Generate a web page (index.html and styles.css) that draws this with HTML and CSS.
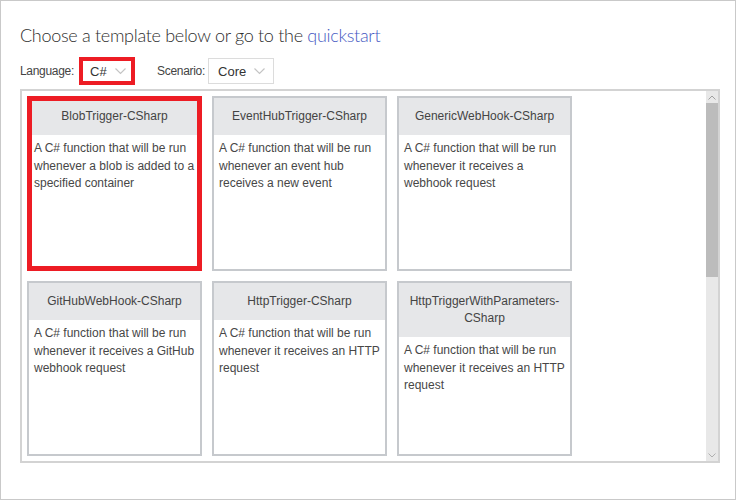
FILE: index.html
```html
<!DOCTYPE html>
<html>
<head>
<meta charset="utf-8">
<link rel="stylesheet" href="styles.css">
</head>
<body>
<div class="frame">
  <h1 class="title">Choose a template below or go to the <a class="link">quickstart</a></h1>
  <div class="filters">
    <span class="flabel">Language:</span>
    <div class="select lang highlighted"><span>C#</span><svg class="chev" width="11" height="7" viewBox="0 0 11 7"><polyline points="0.5,0.5 5.5,5.5 10.5,0.5" fill="none" stroke="#c4c4c4" stroke-width="1.2"/></svg></div>
    <span class="flabel scen">Scenario:</span>
    <div class="select core"><span>Core</span><svg class="chev" width="11" height="7" viewBox="0 0 11 7"><polyline points="0.5,0.5 5.5,5.5 10.5,0.5" fill="none" stroke="#c4c4c4" stroke-width="1.2"/></svg></div>
  </div>
  <div class="panel">
    <div class="grid">
      <div class="card selected">
        <div class="card-head">BlobTrigger-CSharp</div>
        <div class="card-body">A C# function that will be run whenever a blob is added to a specified container</div>
      </div>
      <div class="card">
        <div class="card-head">EventHubTrigger-CSharp</div>
        <div class="card-body">A C# function that will be run whenever an event hub receives a new event</div>
      </div>
      <div class="card">
        <div class="card-head">GenericWebHook-CSharp</div>
        <div class="card-body">A C# function that will be run whenever it receives a webhook request</div>
      </div>
      <div class="card">
        <div class="card-head">GitHubWebHook-CSharp</div>
        <div class="card-body">A C# function that will be run whenever it receives a GitHub webhook request</div>
      </div>
      <div class="card">
        <div class="card-head">HttpTrigger-CSharp</div>
        <div class="card-body">A C# function that will be run whenever it receives an HTTP request</div>
      </div>
      <div class="card">
        <div class="card-head">HttpTriggerWithParameters-CSharp</div>
        <div class="card-body">A C# function that will be run whenever it receives an HTTP request</div>
      </div>
    </div>
    <div class="scrollbar">
      <div class="sb-btn"><svg width="8" height="5" viewBox="0 0 8 5"><polyline points="0.5,4.5 4,1 7.5,4.5" fill="none" stroke="#a0a0a0" stroke-width="1"/></svg></div>
      <div class="sb-thumb"></div>
      <div class="sb-track"></div>
      <div class="sb-btn"><svg width="8" height="5" viewBox="0 0 8 5"><polyline points="0.5,0.5 4,4 7.5,0.5" fill="none" stroke="#b0b0b0" stroke-width="1"/></svg></div>
    </div>
  </div>
</div>
</body>
</html>
```
FILE: styles.css
```css
html, body {
  margin: 0;
  padding: 0;
  background: #ffffff;
}
body {
  font-family: "Liberation Sans", Arial, sans-serif;
  color: #444444;
}
.frame {
  box-sizing: border-box;
  width: 736px;
  height: 500px;
  border: 1px solid #c9c9c9;
  padding: 0 0 0 19px;
}
.title {
  margin: 20px 0 0 0;
  font-family: Lato, "Liberation Sans", sans-serif;
  font-weight: 300;
  font-size: 18px;
  letter-spacing: -0.3px;
  line-height: 28px;
  color: #2e2e2e;
}
.link {
  color: #4659c2;
}
.filters {
  display: flex;
  align-items: center;
  height: 28px;
  margin-top: 8px;
  font-size: 12px;
  color: #444;
}
.flabel {
  margin-right: 6px;
  letter-spacing: -0.3px;
}
.scen {
  margin-left: 22px;
  margin-right: 3px;
}
.select {
  position: relative;
  box-sizing: border-box;
  display: flex;
  align-items: center;
  justify-content: space-between;
  height: 26px;
  border: 1px solid #dcdcdc;
  padding: 0 8px 0 9px;
  font-size: 13px;
  color: #333;
}
.lang {
  width: 55px;
}
.core {
  width: 66px;
}
.chev {
  display: block;
}
.highlighted::after {
  content: "";
  position: absolute;
  top: -2px;
  left: -2px;
  right: -1px;
  bottom: -2px;
  border: 4px solid #ed1c24;
}
.panel {
  box-sizing: border-box;
  display: flex;
  justify-content: space-between;
  width: 700px;
  height: 374px;
  margin-top: 4px;
  border: 2px solid #d3d3d3;
}
.grid {
  display: grid;
  grid-template-columns: repeat(3, 175px);
  grid-auto-rows: 175px;
  gap: 10px;
  padding: 5px;
  align-content: start;
}
.card {
  position: relative;
  box-sizing: border-box;
  border: 2px solid #c6c9cd;
  background: #fff;
  display: flex;
  flex-direction: column;
}
.selected::after {
  content: "";
  position: absolute;
  top: -2px;
  left: -2px;
  right: -2px;
  bottom: -2px;
  border: 5px solid #ed1c24;
}
.card-head {
  background: #e6e7e9;
  padding: 10px 8px;
  font-size: 12px;
  line-height: 17px;
  text-align: center;
  color: #444;
}
.card-body {
  padding: 5px 3px 5px 5px;
  font-size: 12px;
  line-height: 17.5px;
  color: #474747;
}
.scrollbar {
  width: 12px;
  display: flex;
  flex-direction: column;
  background: #e8e8e8;
}
.sb-btn {
  height: 12px;
  display: flex;
  align-items: center;
  justify-content: center;
}
.sb-thumb {
  height: 174px;
  background: #bcbcbc;
}
.sb-track {
  flex: 1;
}
```
